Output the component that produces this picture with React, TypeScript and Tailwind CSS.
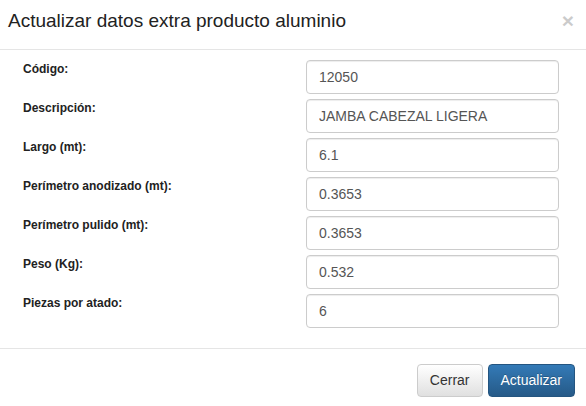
import React from 'react';

const fields = [
  { label: 'Código:', value: '12050' },
  { label: 'Descripción:', value: 'JAMBA CABEZAL LIGERA' },
  { label: 'Largo (mt):', value: '6.1' },
  { label: 'Perímetro anodizado (mt):', value: '0.3653' },
  { label: 'Perímetro pulido (mt):', value: '0.3653' },
  { label: 'Peso (Kg):', value: '0.532' },
  { label: 'Piezas por atado:', value: '6' },
];

const App: React.FC = () => {
  return (
    <div className="w-[586px] h-[406px] bg-white overflow-hidden font-['Liberation_Sans',Arial,sans-serif] text-[#333]">
      {/* Header */}
      <div className="h-[50px] border-b border-[#e5e5e5] pt-[11px] pl-[8px] pr-[12px] flex items-start justify-between">
        <h4 className="text-[19px] leading-[20px] font-normal text-[#222]">
          Actualizar datos extra producto aluminio
        </h4>
        <button className="text-[21px] leading-[16px] font-bold text-black opacity-20 mt-[2px]">×</button>
      </div>

      {/* Body */}
      <div className="pt-[10px] pb-[20px] pl-[23px] border-b border-[#e5e5e5]">
        <div className="flex flex-col gap-[5px]">
          {fields.map((f) => (
            <div key={f.label} className="flex h-[34px]">
              <label className="w-[283px] text-[12px] leading-[17px] font-bold pt-[1px] text-[#222]">{f.label}</label>
              <input
                type="text"
                defaultValue={f.value}
                className="w-[253px] h-[34px] px-[12px] border border-[#ccc] rounded-[4px] text-[14px] text-[#555] shadow-[inset_0_1px_1px_rgba(0,0,0,0.075)] outline-none"
              />
            </div>
          ))}
        </div>
      </div>

      {/* Footer */}
      <div className="pt-[15px] pr-[11px] flex justify-end gap-[5px]">
        <button className="h-[33px] px-[12px] text-[14px] rounded-[4px] border border-[#ccc] text-[#333] bg-gradient-to-b from-white to-[#e0e0e0] shadow-[0_1px_0_rgba(255,255,255,0.15)]">
          Cerrar
        </button>
        <button className="h-[33px] px-[12px] text-[14px] rounded-[4px] border border-[#245580] text-white bg-gradient-to-b from-[#337ab7] to-[#265a88] [text-shadow:0_-1px_0_rgba(0,0,0,0.2)]">
          Actualizar
        </button>
      </div>
    </div>
  );
};

export default App;
